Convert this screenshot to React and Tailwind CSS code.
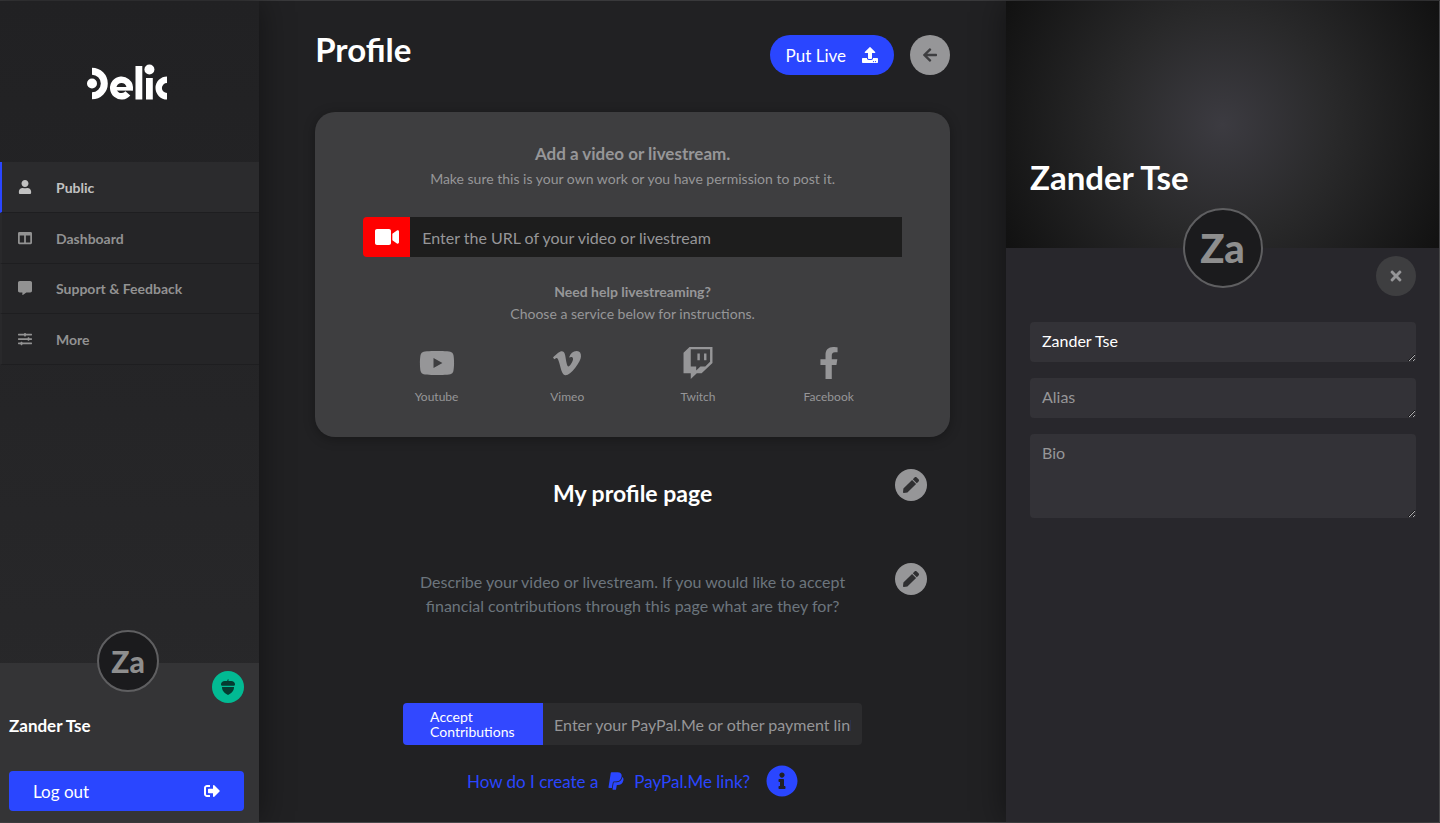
import { useState } from 'react';
import {
  FaArrowLeft,
  FaColumns,
  FaCommentAlt,
  FaFacebookF,
  FaInfoCircle,
  FaPaypal,
  FaPen,
  FaSignOutAlt,
  FaSlidersH,
  FaTimes,
  FaTwitch,
  FaUpload,
  FaUser,
  FaVideo,
  FaVimeoV,
  FaYoutube,
} from 'react-icons/fa';

const NAV = [
  { label: 'Public', icon: FaUser, active: true },
  { label: 'Dashboard', icon: FaColumns },
  { label: 'Support & Feedback', icon: FaCommentAlt },
  { label: 'More', icon: FaSlidersH },
];

const SERVICES = [
  { label: 'Youtube', icon: FaYoutube, size: 36 },
  { label: 'Vimeo', icon: FaVimeoV, size: 32 },
  { label: 'Twitch', icon: FaTwitch, size: 32 },
  { label: 'Facebook', icon: FaFacebookF, size: 32 },
];

// Rings, dots and bars, with a half ring on both ends
function Logo() {
  return (
    <svg width="80" height="37" viewBox="0 0 80 37" fill="#fff" role="img" aria-label="Delic">
      <svg x="5" y="0" width="20" height="37">
        <circle cx="0" cy="20.500" r="12.300" fill="none" stroke="#fff" strokeWidth="7" />
      </svg>
      <circle cx="5" cy="20.500" r="5" />
      <circle
        cx="34.500"
        cy="25"
        r="8.300"
        fill="none"
        stroke="#fff"
        strokeWidth="6.400"
        pathLength="360"
        strokeDasharray="332 28"
        transform="rotate(40 34.500 25)"
      />
      <rect x="27" y="24" width="18.800" height="3.600" />
      <rect x="48.500" y="3" width="6.800" height="33.500" />
      <rect x="59" y="15" width="6.800" height="21.500" />
      <circle cx="62.400" cy="6.500" r="5" />
      <circle cx="80" cy="25" r="8.300" fill="none" stroke="#fff" strokeWidth="6.400" />
    </svg>
  );
}

function Acorn() {
  return (
    <svg width="16" height="16" viewBox="0 0 16 16" fill="#053b30" aria-hidden="true">
      <path d="M7.200 2C7.200 1.200 7.600.5 8 .2l.8.5c-.3.400-.4.800-.4 1.300h2.800C13.400 2 15 3.400 15 5.200c0 1-.6 1.600-1.600 1.600H2.600C1.600 6.800 1 6.200 1 5.200 1 3.400 2.600 2 4.800 2z" />
      <path d="M2 8h12c0 4-2.500 6-6 8-3.500-2-6-4-6-8z" />
    </svg>
  );
}

function Sidebar() {
  return (
    <aside className="z-10 flex w-[18%] shrink-0 flex-col bg-linear-to-b from-[#212123] to-[#29292b] shadow-[0_0_32px_rgba(0,0,0,0.45)]">
      <a href="#home" className="flex h-[161px] items-center justify-center pr-[6px]">
        <Logo />
      </a>
      <nav className="grid h-[203px] auto-rows-fr">
        {NAV.map(({ label, icon: Icon, active }) => (
          <a
            key={label}
            href={`#${label.toLowerCase()}`}
            className={
              active
                ? 'flex items-center border-b border-l-2 border-b-[#1e1e20] border-l-[#2a46ff] bg-[#2b2b2d] pl-4 text-sm font-bold text-[#c2c2c2]'
                : 'flex items-center border-b border-l-2 border-b-[#1e1e20] border-l-[#29292b] bg-[#252527] pl-4 text-sm font-bold text-[#929292]'
            }
          >
            <span className="flex w-[14px] justify-center">
              <Icon size={14} />
            </span>
            <span className="ml-6 pt-0.5">{label}</span>
          </a>
        ))}
      </nav>
      <div className="relative mt-auto bg-[#343436] pt-[51px] pr-[15px] pb-[11px] pl-[9px]">
        <span className="absolute -top-[33px] left-32 flex size-[62px] -translate-x-1/2 items-center justify-center rounded-full border-2 border-[#5f5f61] bg-[#1b1b1d] text-3xl font-black text-[#8e8e8e]">
          Za
        </span>
        <span className="absolute top-2 right-[15px] flex size-8 items-center justify-center rounded-full bg-[#02ba93]">
          <Acorn />
        </span>
        <p className="text-[17px] leading-6 font-bold text-white">Zander Tse</p>
        <button
          type="button"
          className="mt-[33px] flex h-10 w-full items-center justify-between rounded bg-[#2a46ff] px-6 text-[17px] text-white"
        >
          <span className="pt-0.5">Log out</span>
          <FaSignOutAlt size={16} />
        </button>
      </div>
    </aside>
  );
}

function VideoCard() {
  return (
    <section className="mt-[37px] rounded-[20px] bg-[#3e3e40] px-12 py-[30px] text-center text-[#969698] shadow-[0_2px_12px_rgba(0,0,0,0.3)]">
      <h2 className="text-[17px] leading-6 font-bold">Add a video or livestream.</h2>
      <p className="text-sm leading-[26px]">Make sure this is your own work or you have permission to post it.</p>
      <div className="mt-[25px] flex h-10">
        <label htmlFor="video-url" className="flex w-[47px] items-center justify-center rounded-l bg-[#ff0000] text-white">
          <FaVideo size={24} aria-label="Video URL" />
        </label>
        <input
          id="video-url"
          type="url"
          placeholder="Enter the URL of your video or livestream"
          className="min-w-0 flex-1 bg-[#1d1d1d] px-3 pt-0.5 text-base placeholder:text-[#969698]"
        />
      </div>
      <p className="mt-6 text-sm leading-[22px] font-bold">Need help livestreaming?</p>
      <p className="text-sm leading-[22px]">Choose a service below for instructions.</p>
      <div className="mt-[22px] grid grid-cols-4 px-2">
        {SERVICES.map(({ label, icon: Icon, size }) => (
          <button key={label} type="button" className="flex flex-col items-center gap-2 text-xs leading-5">
            <span className="flex h-8 items-center">
              <Icon size={size} />
            </span>
            {label}
          </button>
        ))}
      </div>
    </section>
  );
}

function EditButton({ label }) {
  return (
    <button
      type="button"
      aria-label={label}
      className="ml-[33px] flex size-8 items-center justify-center rounded-full bg-[#969698] text-[#2f2f31]"
    >
      <FaPen size={16} />
    </button>
  );
}

function Main() {
  return (
    <main className="min-w-0 flex-1 bg-[#212123] px-14 pt-[34px]">
      <header className="flex items-start">
        <h1 className="text-[33px] leading-7 font-bold text-white">Profile</h1>
        <button
          type="button"
          className="ml-auto flex h-10 items-center gap-4 rounded-full bg-[#2a46ff] px-4 text-[17px] text-white"
        >
          <span className="pt-0.5">Put Live</span>
          <FaUpload size={16} />
        </button>
        <button
          type="button"
          aria-label="Back"
          className="ml-4 flex size-10 items-center justify-center rounded-full bg-[#969698] text-[#3e3e40]"
        >
          <FaArrowLeft size={16} />
        </button>
      </header>
      <VideoCard />
      <div className="mt-8 grid grid-cols-[1fr_459px_1fr]">
        <h2 className="col-start-2 pt-2 text-center text-[23px] leading-8 font-bold text-white">My profile page</h2>
        <EditButton label="Edit title" />
      </div>
      <div className="mt-[54px] grid h-[140px] grid-cols-[1fr_459px_1fr]">
        <p className="col-start-2 pt-[7px] text-center text-base leading-6 text-[#6c757d]">
          Describe your video or livestream. If you would like to accept financial contributions through this page what
          are they for?
        </p>
        <EditButton label="Edit description" />
      </div>
      <div className="mx-auto flex h-[42px] w-[459px]">
        <button
          type="button"
          className="w-[140px] rounded-l bg-[#3248ff] pr-5 pl-[27px] text-left text-sm leading-[15px] text-white"
        >
          Accept Contributions
        </button>
        <input
          type="text"
          aria-label="Payment link"
          placeholder="Enter your PayPal.Me or other payment link"
          className="min-w-0 flex-1 rounded-r border-x-[11px] border-[#2c2c2e] bg-[#2c2c2e] pt-0.5 text-base placeholder:text-[#969698]"
        />
      </div>
      <a href="#paypal" className="mt-5 mb-5 flex items-center justify-center text-[17px] text-[#2a46ff]">
        <span className="pt-0.5">How do I create a</span>
        <FaPaypal size={20} className="mx-2" />
        <span className="pt-0.5">PayPal.Me link?</span>
        <FaInfoCircle size={32} className="ml-4" />
      </a>
    </main>
  );
}

function ProfilePanel() {
  const [name, setName] = useState('Zander Tse');
  const field =
    'block w-full rounded bg-[#333237] px-3 pt-[7px] pb-[9px] text-base leading-6 text-white placeholder:text-[#969698]';

  return (
    <aside className="z-10 w-[434px] shrink-0 border-r border-[#48484a] bg-[#28272c] shadow-[0_0_32px_rgba(0,0,0,0.45)]">
      <div className="relative flex h-[247px] items-end bg-[radial-gradient(circle,#3c3b41,#29292a_45%,#111111)] px-6 pb-[51px]">
        <h2 className="text-[33px] leading-10 font-bold text-white">Zander Tse</h2>
        <span className="absolute -bottom-10 left-1/2 flex size-20 -translate-x-1/2 items-center justify-center rounded-full border-2 border-[#5f5f61] bg-[#1b1b1d] text-[40px] font-black text-[#8e8e8e]">
          Za
        </span>
      </div>
      <div className="flex flex-col pt-2 pr-[23px] pl-6">
        <button
          type="button"
          aria-label="Close"
          className="flex size-10 items-center justify-center self-end rounded-full bg-[#3e3e40] text-[#969698]"
        >
          <FaTimes size={16} />
        </button>
        <div className="mt-[26px] flex flex-col gap-4">
          <textarea
            rows={1}
            aria-label="Name"
            value={name}
            onChange={(e) => setName(e.target.value)}
            className={field}
          />
          <textarea rows={1} aria-label="Alias" placeholder="Alias" className={field} />
          <textarea aria-label="Bio" placeholder="Bio" className={`${field} h-[84px]`} />
        </div>
      </div>
    </aside>
  );
}

export default function App() {
  return (
    <div className="flex min-h-screen border-y border-t-[#39393b] border-b-[#48484a] bg-[#212123] font-[Lato,sans-serif]">
      <Sidebar />
      <Main />
      <ProfilePanel />
    </div>
  );
}
